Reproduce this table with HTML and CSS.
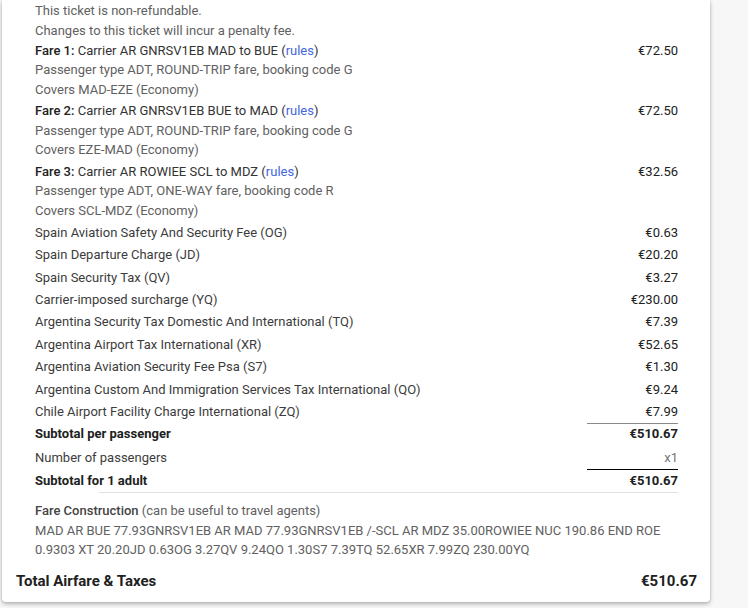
FILE: index.html
```html
<!DOCTYPE html>
<html>
<head>
<meta charset="utf-8">
<link rel="stylesheet" href="styles.css">
</head>
<body>
<div class="card">
  <div class="inner">
    <div class="notes">
      <div>This ticket is non-refundable.</div>
      <div>Changes to this ticket will incur a penalty fee.</div>
    </div>
    <table class="fares">
      <tr class="fare">
        <td class="desc">
          <div class="main"><b>Fare 1:</b> Carrier AR GNRSV1EB MAD to BUE (<a class="link">rules</a>)</div>
          <div class="sub">Passenger type ADT, ROUND-TRIP fare, booking code G</div>
          <div class="sub">Covers MAD-EZE (Economy)</div>
        </td>
        <td class="price">€72.50</td>
      </tr>
      <tr class="fare">
        <td class="desc">
          <div class="main"><b>Fare 2:</b> Carrier AR GNRSV1EB BUE to MAD (<a class="link">rules</a>)</div>
          <div class="sub">Passenger type ADT, ROUND-TRIP fare, booking code G</div>
          <div class="sub">Covers EZE-MAD (Economy)</div>
        </td>
        <td class="price">€72.50</td>
      </tr>
      <tr class="fare">
        <td class="desc">
          <div class="main"><b>Fare 3:</b> Carrier AR ROWIEE SCL to MDZ (<a class="link">rules</a>)</div>
          <div class="sub">Passenger type ADT, ONE-WAY fare, booking code R</div>
          <div class="sub">Covers SCL-MDZ (Economy)</div>
        </td>
        <td class="price">€32.56</td>
      </tr>
      <tr class="tax"><td class="desc">Spain Aviation Safety And Security Fee (OG)</td><td class="price">€0.63</td></tr>
      <tr class="tax"><td class="desc">Spain Departure Charge (JD)</td><td class="price">€20.20</td></tr>
      <tr class="tax"><td class="desc">Spain Security Tax (QV)</td><td class="price">€3.27</td></tr>
      <tr class="tax"><td class="desc">Carrier-imposed surcharge (YQ)</td><td class="price">€230.00</td></tr>
      <tr class="tax"><td class="desc">Argentina Security Tax Domestic And International (TQ)</td><td class="price">€7.39</td></tr>
      <tr class="tax"><td class="desc">Argentina Airport Tax International (XR)</td><td class="price">€52.65</td></tr>
      <tr class="tax"><td class="desc">Argentina Aviation Security Fee Psa (S7)</td><td class="price">€1.30</td></tr>
      <tr class="tax"><td class="desc">Argentina Custom And Immigration Services Tax International (QO)</td><td class="price">€9.24</td></tr>
      <tr class="tax"><td class="desc">Chile Airport Facility Charge International (ZQ)</td><td class="price">€7.99</td></tr>
      <tr class="subtotal"><td class="desc strong">Subtotal per passenger</td><td class="price strong rule-gray">€510.67</td></tr>
      <tr class="count"><td class="desc">Number of passengers</td><td class="price muted">x1</td></tr>
      <tr class="subtotal last"><td class="desc strong">Subtotal for 1 adult</td><td class="price strong rule-black">€510.67</td></tr>
    </table>
    <div class="separator"></div>
    <div class="construction">
      <div><b>Fare Construction</b> (can be useful to travel agents)</div>
      <div>MAD AR BUE 77.93GNRSV1EB AR MAD 77.93GNRSV1EB /-SCL AR MDZ 35.00ROWIEE NUC 190.86 END ROE</div>
      <div>0.9303 XT 20.20JD 0.63OG 3.27QV 9.24QO 1.30S7 7.39TQ 52.65XR 7.99ZQ 230.00YQ</div>
    </div>
  </div>
  <div class="total">
    <span>Total Airfare &amp; Taxes</span>
    <span>€510.67</span>
  </div>
</div>
</body>
</html>
```

FILE: styles.css
```css
html, body {
  margin: 0;
  padding: 0;
}
body {
  background: #f7f7f7;
  font-family: Roboto, "Noto Sans", sans-serif;
  font-size: 13px;
  line-height: 19.5px;
  color: #212121;
  width: 748px;
  height: 608px;
  overflow: hidden;
}
.card {
  margin-left: 2px;
  width: 708px;
  background: #fff;
  border-radius: 0 0 4px 4px;
  box-shadow: 0 2px 4px rgba(0, 0, 0, 0.28), 0 0 2px rgba(0, 0, 0, 0.12);
}
.inner {
  padding: 1px 32px 0 33px;
}
.notes {
  color: #616161;
}
.fares {
  width: 100%;
  border-collapse: collapse;
}
.fares td {
  padding: 0;
  vertical-align: top;
}
.fare td {
  padding: 0.5px 0 1.5px;
}
.tax td {
  padding: 1.45px 0;
}
.subtotal td {
  padding: 0.5px 0 1.5px;
}
.count td {
  padding: 2.75px 0 1px;
}
.subtotal.last td {
  padding: 1.5px 0 1.5px;
}
.desc {
  color: #3c3c3c;
}
.desc b {
  font-weight: 500;
  color: #212121;
}
.main {
  color: #333;
}
.sub {
  color: #616161;
}
.link {
  color: #4466dd;
  text-decoration: none;
}
.price {
  width: 91px;
  text-align: right;
  color: #212121;
  white-space: nowrap;
}
.strong {
  font-weight: 700;
  color: #212121;
}
.muted {
  color: #757575;
}
.rule-gray {
  border-top: 1px solid #8a8a8a;
}
.rule-black {
  border-top: 1px solid #000;
}
.separator {
  margin: 0 0 0 64px;
  border-top: 1px solid #e0e0e0;
}
.construction {
  padding-top: 8px;
  color: #616161;
}
.construction b {
  font-weight: 500;
  color: #444;
}
.total {
  display: flex;
  justify-content: space-between;
  padding: 10.25px 13px 10px 14px;
  font-size: 15px;
  line-height: 22px;
  font-weight: 700;
  color: #212121;
}
```
